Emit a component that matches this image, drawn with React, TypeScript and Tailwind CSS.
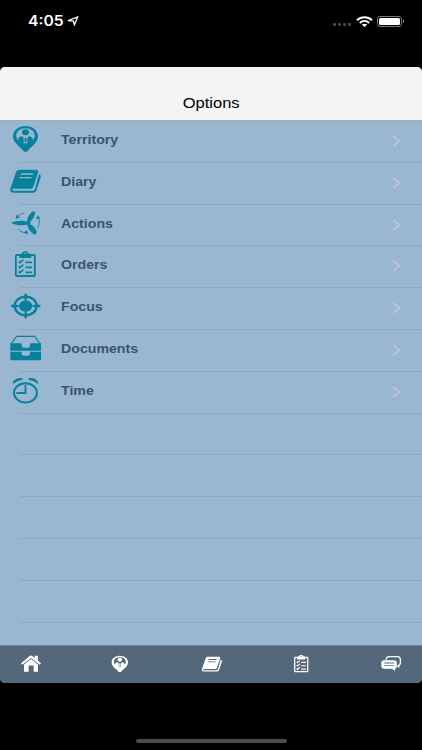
import React from "react";

interface IconProps {
  className?: string;
}

const PinIcon = ({ className }: IconProps) => (
  <svg viewBox="0 0 96 84" className={className} fill="currentColor" preserveAspectRatio="none">
    <path
      fillRule="evenodd"
      d="M49.500 3C28 3 12 16 12 34c0 15 12 25 23 35 5 5 9 12 14.500 12S59 74 64 69c11-10 23-20 23-35C87 16 71 3 49.500 3zm0 7C65 10 77 19 77 32S65 55 49.500 55 22 45 22 32s12-22 27.500-22z"
    />
    <ellipse cx="49.500" cy="22" rx="10.500" ry="9" />
    <path d="M27 46c0-8 5-12 13-12l4 6v17c-8 0-13-4-17-11zM72 46c0-8-5-12-13-12l-4 6v17c8 0 13-4 17-11z" />
    <path d="M47.500 38h4l1.500 10-3.500 5-3.500-5z" />
  </svg>
);

const BookIcon = ({ className }: IconProps) => (
  <svg viewBox="0 0 96 84" className={className} fill="none" preserveAspectRatio="none">
    <path
      fill="currentColor"
      fillRule="evenodd"
      d="M31 8h49c6 0 9 3 7 9L73 59c-1 4-4 6-8 6H14c-4 0-5 2-3 5l2 1h56c5 0 7-1 9-6l12-43c5 2 6 5 5 9L83 69c-2 6-5 8-11 8H13C5 77 2 71 5 63L21 16c2-5 5-8 10-8zm5 11-1 4h36l1-4zm-4 11-1 4h36l1-4z"
    />
  </svg>
);

const TurbineIcon = ({ className }: IconProps) => (
  <svg viewBox="0 0 96 84" className={className} fill="currentColor" preserveAspectRatio="none">
    <path d="M55 39C53 27 62 13 73 7c4 0 6 4 5 8-4 12-10 19-17 25z" />
    <path d="M56 46c-14 6-36 2-50-4 14-8 37-9 50-3z" />
    <path d="M61 44c11 5 20 14 22 25 0 5-3 9-8 7-10-7-18-17-20-29z" />
    <circle cx="58" cy="42" r="7" />
    <g fill="none" stroke="currentColor" strokeWidth="2.500">
      <path d="M25 23c6-6 13-10 21-10" />
      <path d="M28 60c6 8 14 11 24 11" />
      <path d="M84 57c8-9 9-19 5-29" />
    </g>
    <path d="M20 30l3-13 10 8zM57 75l-13-3 10-9zM81 30l5-11 8 9z" />
  </svg>
);

const ClipboardIcon = ({ className }: IconProps) => (
  <svg viewBox="0 0 96 84" className={className} fill="none" stroke="currentColor" preserveAspectRatio="none">
    <rect x="20.500" y="15" width="57" height="63" rx="3" strokeWidth="5.500" />
    <path
      fill="currentColor"
      stroke="none"
      fillRule="evenodd"
      d="M31 24v-8c0-3 3-5 8-5 1-5 5-7 10-7s9 2 10 7c5 0 8 2 8 5v8zM49 8a2.500 2.500 0 1 0 .1 0z"
    />
    <path strokeWidth="5" d="M29 34l4 4 10-9M29 49l4 4 10-9M29 64l4 4 10-9M49 37h20M49 52h20M49 67h20" />
  </svg>
);

const FocusIcon = ({ className }: IconProps) => (
  <svg viewBox="0 0 96 84" className={className} fill="none" stroke="currentColor" preserveAspectRatio="none">
    <ellipse cx="50" cy="42" rx="33" ry="28" strokeWidth="7.500" />
    <path strokeWidth="8" d="M50 5v17M50 62v17M6 42h20M74 42h20" />
    <path strokeWidth="5" d="M50 20v10M50 54v10M24 42h10M66 42h10" />
    <ellipse cx="50" cy="42" rx="20" ry="17.500" fill="currentColor" stroke="none" />
  </svg>
);

const TrayIcon = ({ className }: IconProps) => (
  <svg viewBox="0 0 96 84" className={className} fill="currentColor" preserveAspectRatio="none">
    <path fill="none" stroke="currentColor" strokeWidth="3.500" d="M6 30L23 7h54L94 30" />
    <path d="M4 28h32c2 0 2 3 2 6 0 5 2 7 6 7h13c4 0 6-2 6-7 0-3 0-6 2-6h31v22H4z" />
    <path d="M4 53h32c2 0 2 2 2 5 0 5 2 7 6 7h13c4 0 6-2 6-7 0-3 0-5 2-5h31v26H4z" />
  </svg>
);

const ClockIcon = ({ className }: IconProps) => (
  <svg viewBox="0 0 96 84" className={className} fill="none" stroke="currentColor" preserveAspectRatio="none">
    <ellipse cx="49.500" cy="50.500" rx="34.500" ry="29" strokeWidth="6" />
    <path strokeWidth="5.500" d="M49.500 26v25H22" />
    <path
      fill="currentColor"
      stroke="none"
      d="M11 22C13 11 27 4 39 7c3 1 2 4-1 5-8 1-15 4-22 10-2 2-5 2-5 0zM88 22C86 11 72 4 60 7c-3 1-2 4 1 5 8 1 15 4 22 10 2 2 5 2 5 0z"
    />
  </svg>
);

const HomeIcon = ({ className }: IconProps) => (
  <svg viewBox="0 0 60 50" className={className} fill="currentColor" preserveAspectRatio="none">
    <path d="M0 24L26 3c3-2 5-2 8 0l26 21-4 5L30 9 4 29z" />
    <path d="M41 2h10v16l-10-8z" />
    <path d="M9 28l21-16 21 16v21H38V31H23v18H9z" />
  </svg>
);

const ChatIcon = ({ className }: IconProps) => (
  <svg viewBox="0 0 62 46" className={className} preserveAspectRatio="none">
    <path
      fill="none"
      stroke="currentColor"
      strokeWidth="4"
      d="M16 12c0-6 3-10 10-10h25c6 0 9 3 9 9v10c0 4-2 7-5 8v4l-5-3"
    />
    <path
      fill="currentColor"
      fillRule="evenodd"
      d="M10 13h30c6 0 9 3 9 8v10c0 5-2 8-6 8v7l-9-7H10c-6 0-9-3-9-8V21c0-5 3-8 9-8zm0 7v3h30v-3zm0 8v3h30v-3z"
    />
  </svg>
);

const menuItems = [
  { label: "Territory", icon: PinIcon },
  { label: "Diary", icon: BookIcon },
  { label: "Actions", icon: TurbineIcon },
  { label: "Orders", icon: ClipboardIcon },
  { label: "Focus", icon: FocusIcon },
  { label: "Documents", icon: TrayIcon },
  { label: "Time", icon: ClockIcon },
];

const emptyRows = [1, 2, 3, 4, 5];

const StatusBar = () => (
  <div className="flex h-[67px] items-start justify-between pt-3 pr-[18px] pl-7 text-white">
    <div className="flex h-[18px] items-center">
      <span className="w-[35px] origin-left scale-x-[1.12] font-['Inter'] text-[14px] leading-[18px] font-semibold">
        4:05
      </span>
      <svg viewBox="0 0 12 10" className="ml-1 h-[10px] w-3" fill="none" stroke="currentColor" strokeWidth="1.3">
        <path d="M1 4.700L10.600 1 7.400 9 6.300 5z" />
      </svg>
    </div>
    <div className="flex h-[18px] items-center">
      <div className="mt-[6px] mr-[5px] flex gap-[2px]">
        {[1, 2, 3, 4].map((dot) => (
          <span key={dot} className="h-[3px] w-[3px] rounded-[1px] bg-[#484848]" />
        ))}
      </div>
      <svg viewBox="0 0 17 11" className="mr-[4px] h-[11px] w-[17px]" fill="none" stroke="currentColor" strokeWidth="2">
        <path d="M1 4.200C5.200.300 11.800.300 16 4.200M3.800 6.900c2.700-2.400 6.700-2.400 9.400 0" />
        <path fill="currentColor" stroke="none" d="M5.800 8.600c1.600-1.300 3.800-1.300 5.400 0L8.500 11z" />
      </svg>
      <div className="flex items-center">
        <div className="h-[11px] w-[25px] rounded-[3px] border border-[#777] p-px">
          <div className="h-full rounded-[1.5px] bg-white" />
        </div>
        <div className="ml-px h-[3px] w-px bg-[#777]" />
      </div>
    </div>
  </div>
);

const App = () => {
  return (
    <div className="flex h-[750px] w-[422px] flex-col overflow-hidden bg-black font-['Liberation_Sans',sans-serif]">
      <StatusBar />

      <div className="flex h-[616px] flex-col overflow-hidden rounded-[5px] bg-[#99b7d1]">
        <header className="flex h-[54px] shrink-0 items-end justify-center border-b border-[#a4adb7] bg-[#f4f4f4] pb-[7px]">
          <h1 className="scale-x-[1.18] text-[14px] leading-5 text-black">Options</h1>
        </header>

        <ul className="h-[524px] overflow-hidden">
          {menuItems.map(({ label, icon: Icon }) => (
            <li key={label} className="flex h-[41.8px] pl-[9px]">
              <Icon className="mt-1 h-7 w-8 shrink-0 text-[#07829d]" />
              <div className="-ml-[21px] flex flex-1 items-start border-b border-[#8ba9c3] pr-[21px] pl-[41.4px]">
                <span className="mt-[9px] origin-left scale-x-[1.18] text-[12px] leading-5 font-bold text-[#3b5370]">
                  {label}
                </span>
                <svg
                  viewBox="0 0 9 12"
                  className="mt-[14px] ml-auto h-3 w-[9px] text-[#bdc5d0]"
                  fill="none"
                  stroke="currentColor"
                  strokeWidth="1.8"
                >
                  <path d="M1.200 1l6.300 5-6.300 5" />
                </svg>
              </div>
            </li>
          ))}
          {emptyRows.map((row) => (
            <li key={row} className="flex h-[41.8px] pl-5">
              <div className="flex-1 border-b border-[#8ba9c3]" />
            </li>
          ))}
        </ul>

        <nav className="flex h-[38px] items-center justify-between border-t border-[#70889d] bg-[#53697b] px-[21px] pb-[2px] text-white">
          <HomeIcon className="h-[17px] w-5" />
          <PinIcon className="h-[18px] w-[21px]" />
          <BookIcon className="ml-[2px] h-[18px] w-[21px]" />
          <ClipboardIcon className="mr-[1px] h-[19px] w-[22px]" />
          <ChatIcon className="h-[15px] w-5" />
        </nav>
      </div>

      <div className="mx-auto mt-14 h-[4px] w-[151px] rounded-full bg-[#4b4b4b]" />
    </div>
  );
};

export default App;
